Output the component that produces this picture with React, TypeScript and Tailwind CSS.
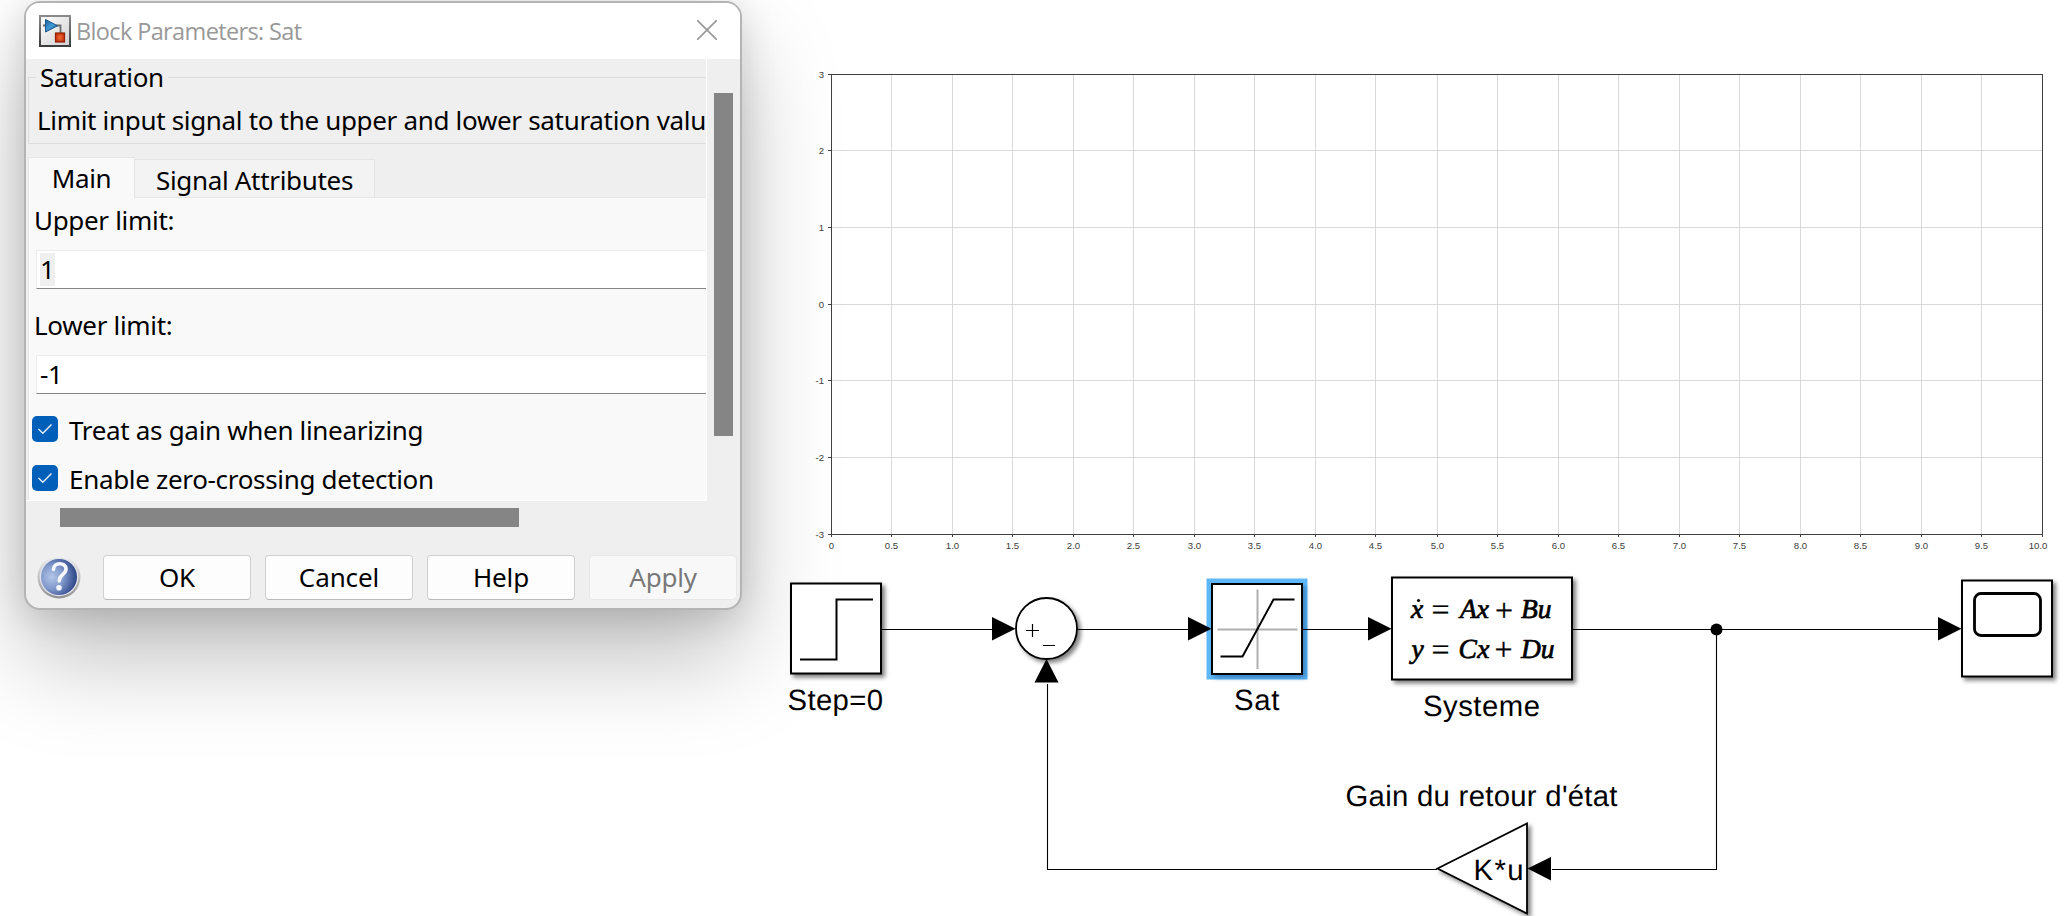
import React from "react";

const ARIAL = "font-['Liberation_Sans',Arial,sans-serif]";

function SimulinkIcon() {
  return (
    <svg width="32" height="32" viewBox="0 0 32 32" className="shrink-0">
      <defs>
        <linearGradient id="icoBg" x1="0" y1="0" x2="1" y2="1">
          <stop offset="0" stopColor="#ffffff" />
          <stop offset="1" stopColor="#cfcfcf" />
        </linearGradient>
        <linearGradient id="icoFrame" x1="0" y1="0" x2="0" y2="1">
          <stop offset="0" stopColor="#8a8a8a" />
          <stop offset="1" stopColor="#3c3c3c" />
        </linearGradient>
        <linearGradient id="icoBlue" x1="0" y1="0" x2="1" y2="1">
          <stop offset="0" stopColor="#1d5f9c" />
          <stop offset="0.5" stopColor="#3f9ad6" />
          <stop offset="1" stopColor="#174f85" />
        </linearGradient>
        <radialGradient id="icoRed">
          <stop offset="0" stopColor="#f0703a" />
          <stop offset="1" stopColor="#c8330c" />
        </radialGradient>
      </defs>
      <rect x="1" y="1" width="30" height="30" fill="url(#icoBg)" stroke="url(#icoFrame)" strokeWidth="2" />
      <path d="M4 10.500h3M17 10.500h4.500V18" fill="none" stroke="#6b6b6b" strokeWidth="1.800" />
      <path d="M6.500 4.500v12.500L18.500 10.800z" fill="url(#icoBlue)" stroke="#1c588f" strokeWidth="1" />
      <rect x="16.500" y="18" width="9" height="9" fill="url(#icoRed)" stroke="#8e2408" strokeWidth="1.200" />
    </svg>
  );
}

function HelpIcon() {
  return (
    <svg width="46" height="46" viewBox="0 0 46 46" className="shrink-0">
      <defs>
        <linearGradient id="helpRing" x1="0" y1="0" x2="0" y2="1">
          <stop offset="0" stopColor="#f3f3f3" />
          <stop offset="0.500" stopColor="#c4c4c4" />
          <stop offset="1" stopColor="#8f8f8f" />
        </linearGradient>
        <radialGradient id="helpBall" cx="0.300" cy="0.500" r="0.720">
          <stop offset="0" stopColor="#b3c6e8" />
          <stop offset="0.450" stopColor="#8199cb" />
          <stop offset="1" stopColor="#263f83" />
        </radialGradient>
      </defs>
      <circle cx="23" cy="23" r="21.500" fill="url(#helpRing)" />
      <circle cx="23" cy="23" r="19.300" fill="#dfe2ea" />
      <circle cx="23" cy="23" r="18" fill="url(#helpBall)" />
      <path d="M17.500 15.500c0-7.500 12.500-7.500 12.500-.5 0 5.500-6.800 5.500-6.800 12" fill="none" stroke="#f4f6fb" strokeWidth="3.600" strokeLinecap="round" />
      <circle cx="23" cy="33.800" r="2.800" fill="#f4f6fb" />
    </svg>
  );
}

function Field({ label, children }: { label: string; children: React.ReactNode }) {
  return (
    <div className="flex h-[105px] flex-col pt-[2px]">
      <label className="h-[50px] pl-[5px] leading-[40px]">{label}</label>
      <div className="ml-[7px] flex h-[39px] w-[700px] items-center border border-b-[#868686] border-l-[#ececec] border-t-[#ececec] bg-white pl-[3px]">
        {children}
      </div>
    </div>
  );
}

function Check({ label }: { label: string }) {
  return (
    <div className="flex h-[49px] items-start pl-[3px] pt-[5px]">
      <span className="mt-[3px] flex size-[26px] shrink-0 items-center justify-center rounded-[5px] bg-[#005fb8]">
        <svg width="16" height="12" viewBox="0 0 16 12" fill="none" stroke="#e6f0f8" strokeWidth="1.400">
          <path d="M1.500 6l4.300 4.300L14.500 1.500" />
        </svg>
      </span>
      <span className="ml-[11px] whitespace-nowrap leading-[34px]">{label}</span>
    </div>
  );
}

function DialogButton({ label, disabled }: { label: string; disabled?: boolean }) {
  return (
    <button
      disabled={disabled}
      className={
        disabled
          ? "h-[45px] w-[148px] rounded-[4px] border border-[#e8e8e8] bg-[#f8f8f8] tracking-[-0.200px] text-[#787878]"
          : "h-[45px] w-[148px] rounded-[4px] border border-[#d0d0d0] border-b-[#bababa] bg-[#fdfdfd] tracking-[-0.100px]"
      }
    >
      {label}
    </button>
  );
}

function Dialog() {
  return (
    <div className="ml-6 mt-px flex h-[609px] w-[718px] flex-col overflow-hidden rounded-[16px] border-2 border-[#b4b4b4] bg-[#efefef] font-['Noto_Sans',sans-serif] text-[26px] tracking-[-0.320px] text-black shadow-[0_48px_96px_rgba(0,0,0,0.25),0_6px_36px_rgba(0,0,0,0.14)]">
      <div className="flex h-14 shrink-0 items-center bg-white pl-[13px] pr-[23px]">
        <SimulinkIcon />
        <span className="ml-[5px] mt-[2px] font-['Open_Sans','Noto_Sans',sans-serif] text-[23.500px] tracking-[-0.630px] text-[#999]">Block Parameters: Sat</span>
        <svg width="20" height="20" viewBox="0 0 20 20" className="ml-auto mt-[-2px]" stroke="#999" strokeWidth="1.700">
          <path d="M0 0L20 20M20 0L0 20" />
        </svg>
      </div>
      <div className="flex h-[442px] shrink-0">
        <div className="flex w-[681px] shrink-0 flex-col overflow-hidden border-b border-r border-white pl-[2px]">
          <fieldset className="h-[85px] w-[720px] shrink-0 border border-[#dcdcdc] pl-[8px]">
            <legend className="ml-[-1px] h-[37px] px-[4px] leading-[37px]">Saturation</legend>
            <p className="whitespace-nowrap leading-[48px]">Limit input signal to the upper and lower saturation valu</p>
          </fieldset>
          <div className="mt-[13px] flex h-[41px] w-[720px] shrink-0 items-end">
            <div className="flex h-[41px] w-[107px] items-center justify-center border border-b-0 border-[#e5e5e5] bg-[#f9f9f9]">Main</div>
            <div className="flex h-[39px] w-[240px] items-center justify-center whitespace-nowrap border border-l-0 border-[#e5e5e5] bg-[#f3f3f3] pt-[3px]">Signal Attributes</div>
            <div className="h-px grow bg-[#e5e5e5]" />
          </div>
          <div className="h-[303px] w-[720px] shrink-0 border-l border-[#e5e5e5] bg-[#f9f9f9]">
            <Field label="Upper limit:">
              <span className="bg-[#efefef] leading-[33px]">1</span>
            </Field>
            <Field label="Lower limit:">-1</Field>
            <Check label="Treat as gain when linearizing" />
            <Check label="Enable zero-crossing detection" />
          </div>
        </div>
        <div className="ml-[7px] mt-[34px] h-[343px] w-[19px] bg-[#858585]" />
      </div>
      <div className="ml-[34px] mt-[7px] h-[19px] w-[459px] shrink-0 bg-[#858585]" />
      <div className="mt-[27px] flex items-center gap-[14px] pl-[10px]">
        <div className="mr-[7px]">
          <HelpIcon />
        </div>
        <DialogButton label="OK" />
        <DialogButton label="Cancel" />
        <DialogButton label="Help" />
        <DialogButton label="Apply" disabled />
      </div>
    </div>
  );
}

function Chart() {
  const xs = Array.from({ length: 21 }, (_, i) => i);
  const ys = Array.from({ length: 7 }, (_, i) => i);
  const px = (i: number) => Math.floor(831 + i * 60.55 + (i % 2 ? 0 : 0.5)) + 0.5;
  const py = (i: number) => Math.floor(74 + i * 76.7) + 0.5;
  return (
    <svg width="1290" height="560" viewBox="780 0 1290 560" className={`${ARIAL} block text-[9.600px]`} fill="#404040">
      {xs.map((i) => (
        <g key={i}>
          <path d={`M${px(i)} 74V534`} stroke="#d9d9d9" />
          <path d={`M${px(i)} 534V537`} stroke="#404040" />
          <text x={i === 20 ? px(i) - 4.500 : px(i)} y="549" textAnchor="middle">
            {i === 0 ? "0" : (i / 2).toFixed(1)}
          </text>
        </g>
      ))}
      {ys.map((i) => (
        <g key={i}>
          <path d={`M831 ${py(i)}H2042`} stroke="#d9d9d9" />
          <path d={`M828 ${py(i)}H831`} stroke="#404040" />
          <text x="824" y={py(i) + 3.500} textAnchor="end">{3 - i}</text>
        </g>
      ))}
      <rect x="831.500" y="74.500" width="1211" height="460" fill="none" stroke="#404040" />
    </svg>
  );
}

function Arrow({ x }: { x: number }) {
  return <path d={`M${x} 617v23.500l23.500-11.800z`} fill="#000" />;
}

function Diagram() {
  return (
    <svg width="1290" height="356" viewBox="780 560 1290 356" textRendering="geometricPrecision" className={`${ARIAL} block text-[29.300px]`} fill="#000">
      <defs>
        <filter id="blockShadow" x="-20%" y="-20%" width="150%" height="150%">
          <feDropShadow dx="3" dy="3" stdDeviation="2" floodColor="#000" floodOpacity="0.5" />
        </filter>
        <filter id="selectedShadow" x="-20%" y="-20%" width="150%" height="150%">
          <feDropShadow dx="3" dy="3" stdDeviation="2" floodColor="#0b4f86" floodOpacity="0.5" />
        </filter>
      </defs>
      <g fill="none" stroke="#000" strokeWidth="1.100">
        <path d="M882 629.500H992M1077 629.500H1188M1308 629.500H1368M1573 629.500H1938" />
        <path d="M1716.500 629.500V869.500H1552M1437 869.500H1047.500V684" />
      </g>
      <circle cx="1716.500" cy="629.500" r="6" />

      <g fill="#fff" stroke="#000" strokeWidth="2" filter="url(#blockShadow)">
        <rect x="791" y="583.500" width="90" height="90" />
        <rect x="1392" y="577.500" width="180" height="102" />
        <rect x="1962" y="580.500" width="90" height="96" />
        <circle cx="1046.500" cy="628.500" r="30.500" strokeWidth="1.800" />
        <path d="M1437.500 868.500L1527 823.500V913.500z" strokeWidth="1.800" />
      </g>

      <path d="M800 659.500H836.500V599.500H873" fill="none" stroke="#000" strokeWidth="2" />
      <text x="787.500" y="709.500" textLength="95.500">Step=0</text>

      <path d="M1026 630.500H1039M1032.500 624V637M1043 645.500H1055" stroke="#000" strokeWidth="1.200" />
      <path d="M1046.500 659L1034.500 682.500H1058.500z" />

      <rect x="1206.500" y="578.500" width="101" height="101" fill="#5fb8f9" />
      <rect x="1212" y="584" width="90" height="90" fill="#fff" stroke="#000" strokeWidth="2" filter="url(#selectedShadow)" />
      <path d="M1303 629.500H1308" stroke="#000" strokeWidth="1.100" />
      <path d="M1257.500 589.500V669M1217.500 629.500H1297.500" stroke="#b0b0b0" strokeWidth="2" />
      <path d="M1220.500 656.500H1242.500L1273.500 599.500H1294.500" fill="none" stroke="#000" strokeWidth="2" />
      <text x="1234" y="709.500" textLength="45.500">Sat</text>

      <Arrow x={992} />
      <Arrow x={1188} />
      <Arrow x={1368} />
      <Arrow x={1938} />
      <path d="M1527.500 868.500L1551 857V880.500z" />

      <g className="font-['Liberation_Serif','Times_New_Roman',serif] text-[27.500px] italic" stroke="#000" strokeWidth="0.700">
        <circle cx="1418.500" cy="600.500" r="1.600" strokeWidth="0" />
        <text x="1411" y="618">x</text>
        <text x="1460" y="618">Ax</text>
        <text x="1521" y="618">Bu</text>
        <text x="1411.500" y="657.500">y</text>
        <text x="1458.500" y="657.500" textLength="31">Cx</text>
        <text x="1521" y="657.500">Du</text>
        <g className="text-[32px] not-italic" strokeWidth="0.300">
          <text x="1431.500" y="620">=</text>
          <text x="1495" y="620.500">+</text>
          <text x="1431.500" y="659.500">=</text>
          <text x="1494.500" y="660">+</text>
        </g>
      </g>
      <text x="1423" y="715.500" textLength="117">Systeme</text>

      <text x="1345.500" y="805.500" textLength="272">Gain du retour d'état</text>
      <text x="1473.500" y="879.500" textLength="50">K*u</text>

      <rect x="1974.500" y="593.500" width="66" height="42" rx="6.500" fill="#fff" stroke="#000" strokeWidth="2.800" />
    </svg>
  );
}

export default function App() {
  return (
    <main className="flex h-[916px] w-[2070px] items-start overflow-hidden bg-white">
      <div className="w-[780px] shrink-0">
        <Dialog />
      </div>
      <div className="relative flex w-[1290px] shrink-0 flex-col">
        <Chart />
        <Diagram />
      </div>
    </main>
  );
}
